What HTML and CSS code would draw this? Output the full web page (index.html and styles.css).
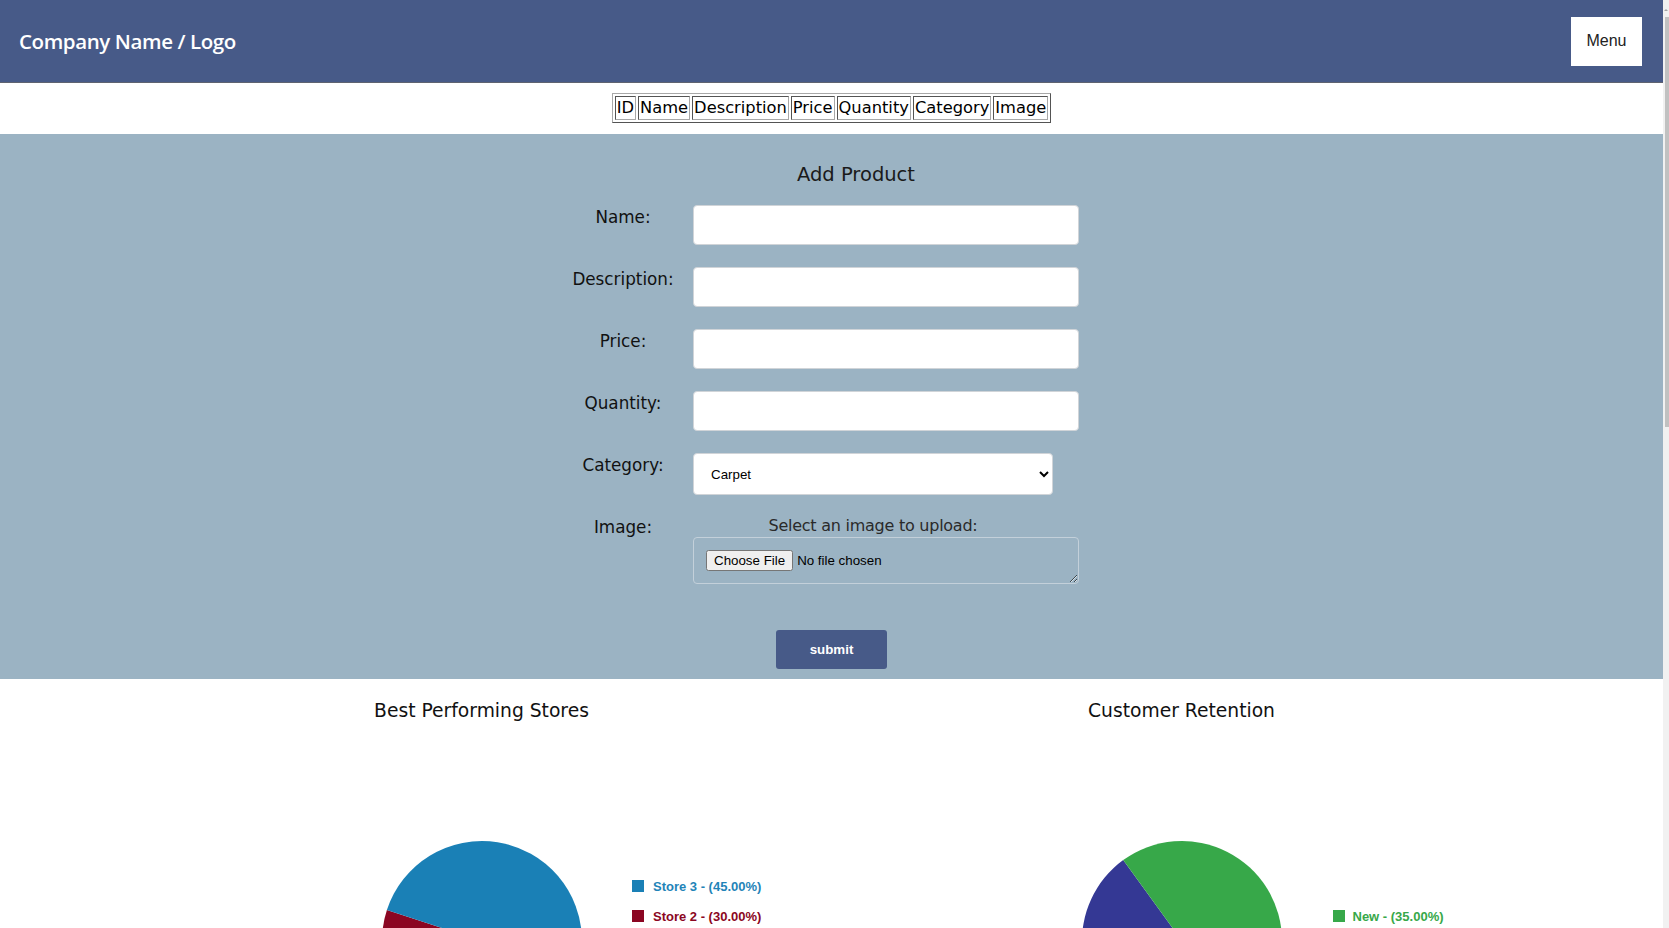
FILE: index.html
```html
<!DOCTYPE html>
<html lang="en">
<head>
<meta charset="utf-8">
<title>Products</title>
<link rel="stylesheet" href="styles.css">
</head>
<body>
<div class="page">
  <main class="content">
    <header class="topbar">
      <div class="brand">Company Name / Logo</div>
      <button class="menu-btn" type="button">Menu</button>
    </header>

    <div class="table-wrap">
      <table class="product-table">
        <tr>
          <td>ID</td><td>Name</td><td>Description</td><td>Price</td><td>Quantity</td><td>Category</td><td>Image</td>
        </tr>
      </table>
    </div>

    <section class="add-product">
      <h3 class="form-title">Add Product</h3>
      <form class="form-grid">
        <label class="field-label" for="name">Name:</label>
        <input class="text-input" id="name" type="text">

        <label class="field-label" for="desc">Description:</label>
        <input class="text-input" id="desc" type="text">

        <label class="field-label" for="price">Price:</label>
        <input class="text-input" id="price" type="text">

        <label class="field-label" for="qty">Quantity:</label>
        <input class="text-input" id="qty" type="text">

        <label class="field-label" for="cat">Category:</label>
        <select class="select-input" id="cat">
          <option>Carpet</option>
          <option>Rug</option>
          <option>Tile</option>
        </select>

        <label class="field-label image-label" for="img">Image:</label>
        <div class="image-cell">
          <div class="upload-caption">Select an image to upload:</div>
          <div class="file-box"><input class="file-input" id="img" type="file"></div>
        </div>
      </form>
      <div class="submit-row">
        <button class="submit-btn" type="button">submit</button>
      </div>
    </section>

    <section class="charts">
      <div class="chart">
        <h3 class="chart-title">Best Performing Stores</h3>
        <svg class="chart-svg" width="700" height="420" viewBox="0 0 700 420">
          <path d="M350,203 L450,203 A100,100 0 0 1 350,303 Z" fill="#f0a030"/>
          <path d="M350,203 L350,303 A100,100 0 0 1 254.9,172.1 Z" fill="#8b0622"/>
          <path d="M350,203 L254.9,172.1 A100,100 0 0 1 450,203 Z" fill="#1a80b6"/>
          <rect x="500" y="142" width="12" height="12" fill="#1a80b6"/>
          <text class="legend" x="521" y="153" fill="#1f84b8">Store 3 - (45.00%)</text>
          <rect x="500" y="172" width="12" height="12" fill="#8b0622"/>
          <text class="legend" x="521" y="183" fill="#8b0622">Store 2 - (30.00%)</text>
          <rect x="500" y="202" width="12" height="12" fill="#f0a030"/>
          <text class="legend" x="521" y="213" fill="#f0a030">Store 1 - (25.00%)</text>
        </svg>
      </div>
      <div class="chart">
        <h3 class="chart-title">Customer Retention</h3>
        <svg class="chart-svg" width="700" height="420" viewBox="0 0 700 420">
          <path d="M350,203 L450,203 A100,100 0 1 1 291.2,122.1 Z" fill="#343894"/>
          <path d="M350,203 L291.2,122.1 A100,100 0 0 1 450,203 Z" fill="#37a849"/>
          <rect x="501" y="172" width="12" height="12" fill="#37a849"/>
          <text class="legend" x="520.5" y="183" fill="#37a849">New - (35.00%)</text>
          <rect x="501" y="202" width="12" height="12" fill="#343894"/>
          <text class="legend" x="520.5" y="213" fill="#343894">Returning - (65.00%)</text>
        </svg>
      </div>
    </section>
  </main>
  <div class="scrollbar">
    <div class="scroll-arrow"></div>
    <div class="scroll-thumb"></div>
  </div>
</div>
</body>
</html>
```
FILE: styles.css
```css
html, body {
  margin: 0;
  height: 100%;
  overflow: hidden;
}

body {
  font-family: "DejaVu Sans", "Liberation Sans", sans-serif;
  color: #111;
  background: #fff;
}

.page {
  display: flex;
  height: 928px;
  overflow: hidden;
}

.content {
  flex: 1;
  min-width: 0;
}

.scrollbar {
  width: 6px;
  flex: none;
  background: #f1f1f1;
  display: flex;
  flex-direction: column;
  align-items: flex-end;
}

.scroll-arrow {
  width: 0;
  height: 0;
  margin: 9px 1px 0 0;
  border-left: 2px solid transparent;
  border-right: 2px solid transparent;
  border-bottom: 2px solid #a3a3a3;
}

.scroll-thumb {
  width: 4px;
  height: 410px;
  margin-top: 6px;
  background: #c1c1c1;
}

.topbar {
  height: 82px;
  background: #475a88;
  border-bottom: 1px solid #5f6370;
  display: flex;
  align-items: center;
  justify-content: space-between;
  padding: 0 21px 0 19px;
}

.brand {
  font-family: "Open Sans", "DejaVu Sans", sans-serif;
  font-weight: 600;
  font-size: 20.5px;
  color: #fff;
  letter-spacing: -0.4px;
}

.menu-btn {
  width: 71px;
  height: 49px;
  background: #fff;
  border: none;
  font-family: "Liberation Sans", Arial, sans-serif;
  font-size: 16px;
  color: #222;
  padding: 0;
}

.table-wrap {
  display: flex;
  justify-content: center;
  padding: 10px 0 11px;
}

.product-table {
  border: 1px outset #a8a8a8;
  border-spacing: 2px;
  font-size: 16.3px;
  line-height: 20px;
  color: #000;
}

.product-table td {
  border: 1px inset #a8a8a8;
  padding: 1px;
}

.add-product {
  background: #9bb3c3;
  padding: 30px 0 10px;
}

.form-title {
  margin: 0 0 19px;
  font-size: 19.5px;
  font-weight: normal;
  color: #1a1a1a;
  text-align: center;
  padding-left: 49px;
  line-height: 22px;
}

.form-grid {
  display: grid;
  grid-template-columns: 136px 386px;
  column-gap: 2px;
  row-gap: 22px;
  justify-content: center;
  padding-right: 29px;
  margin: 0;
}

.field-label {
  text-align: center;
  font-size: 16.8px;
  padding-top: 2px;
  color: #111;
}

.image-label {
  padding-top: 0;
}

.text-input {
  box-sizing: border-box;
  width: 386px;
  height: 40px;
  border: 1px solid #d0d4d8;
  border-radius: 4px;
  background: #fff;
}

.select-input {
  box-sizing: border-box;
  width: 360px;
  height: 42px;
  border: 1px solid #d0d4d8;
  border-radius: 4px;
  background: #fff;
  padding: 0 8px 0 13px;
  font-family: "Liberation Sans", Arial, sans-serif;
  font-size: 13.33px;
  color: #000;
}

.image-cell {
  display: flex;
  flex-direction: column;
}

.upload-caption {
  width: 360px;
  text-align: center;
  font-size: 16px;
  line-height: 20px;
  margin-top: -1px;
  margin-bottom: 1px;
  color: #2a2a2a;
  letter-spacing: -0.25px;
}

.file-box {
  box-sizing: border-box;
  width: 386px;
  height: 47px;
  border: 1px solid #c3d0da;
  border-radius: 4px;
  padding: 12px 12px;
  resize: both;
  overflow: hidden;
}

.file-input {
  font-family: "Liberation Sans", Arial, sans-serif;
  font-size: 13.33px;
  color: #000;
}

.submit-row {
  display: flex;
  justify-content: center;
  padding-top: 46px;
}

.submit-btn {
  width: 111px;
  height: 39px;
  border: none;
  border-radius: 3px;
  background: #475a88;
  color: #fff;
  font-family: "Liberation Sans", Arial, sans-serif;
  font-weight: bold;
  font-size: 13.33px;
}

.charts {
  display: flex;
  justify-content: center;
}

.chart {
  width: 700px;
  flex: none;
}

.chart-title {
  margin: 21px 0 16px;
  font-size: 18.72px;
  font-weight: normal;
  line-height: 22px;
  text-align: center;
  color: #111;
}

.chart-svg {
  display: block;
}

.legend {
  font-family: "Liberation Sans", Arial, sans-serif;
  font-weight: bold;
  font-size: 13px;
}
```
